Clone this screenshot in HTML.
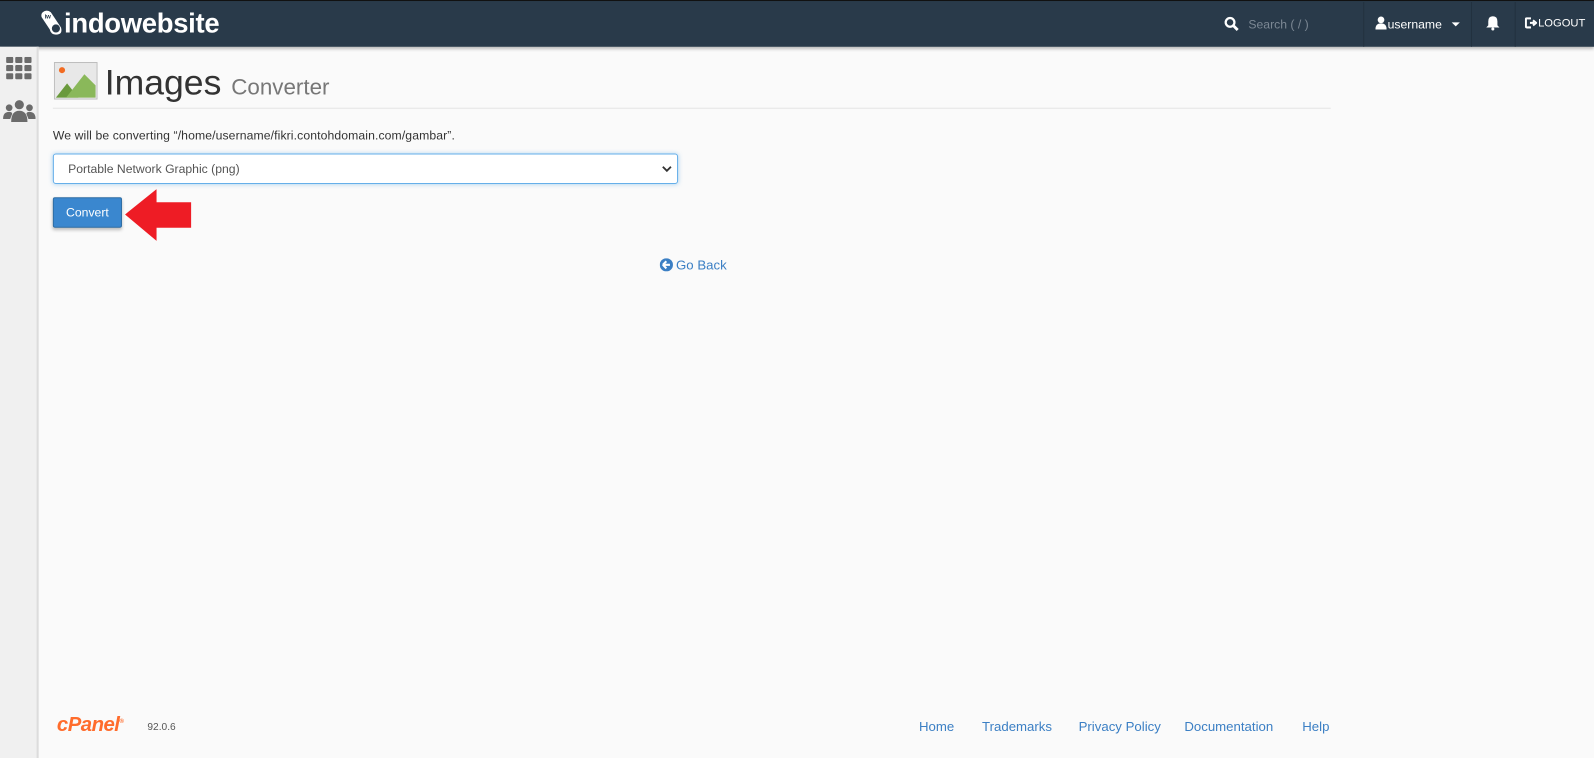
<!DOCTYPE html>
<html><head><meta charset="utf-8"><style>
*{box-sizing:border-box;margin:0;padding:0}
html,body{width:1594px;height:746px;overflow:hidden;background:#fafafa}
#w{position:absolute;left:0;top:0;width:1568px;height:734px;transform:scale(1.01658);transform-origin:0 0;font-family:"Liberation Sans",sans-serif}
.hdr{position:absolute;left:0;top:0;width:1568px;height:46px;background:#293a4a;border-top:1px solid #111;box-shadow:0 2px 3px rgba(0,0,0,.25)}
.logo{position:absolute;left:40px;top:7px;color:#fff;font-size:27px;font-weight:bold;letter-spacing:-.3px}
.side{position:absolute;left:0;top:46px;width:38px;height:700px;background:#f0f0f0;border-right:2px solid #dcdcdc}
.sep{position:absolute;top:1px;width:1px;height:44px;background:#22313f}
.hw{color:#fff;font-size:12px;position:absolute;top:16px}
a{color:#3b7fc4;text-decoration:none}
</style></head><body><div id="w">
<div class="hdr">
 <div class="logo"><svg width="22" height="26" viewBox="0 0 22 26" style="vertical-align:-3px;margin-right:1px"><path d="M2 3 Q6 0 10 3 L20 18 Q22 25 15 25 Q10 25 9 20 L1 8 Q0 5 2 3Z" fill="#fff"/><circle cx="15" cy="19" r="4" fill="#293a4a"/><text x="4" y="9" font-size="6" fill="#293a4a" font-family="Liberation Sans">iw</text></svg>indowebsite</div>
 <svg style="position:absolute;left:1204px;top:15px" width="15" height="15" viewBox="0 0 15 15"><circle cx="6" cy="6" r="4.3" fill="none" stroke="#fff" stroke-width="2.2"/><path d="M9 9l4.5 4.5" stroke="#fff" stroke-width="2.8"/></svg>
 <div class="hw" style="left:1228px;color:#7c8894;font-size:12px">Search ( / )</div>
 <div class="sep" style="left:1341px"></div>
 <svg style="position:absolute;left:1353px;top:15px" width="11" height="13" viewBox="0 0 11 13"><circle cx="5.5" cy="3.5" r="3.3" fill="#fff"/><path d="M0 13 Q0 7 5.5 7 Q11 7 11 13Z" fill="#fff"/></svg>
 <div class="hw" style="left:1365px">username</div>
 <div style="position:absolute;left:1428px;top:21px;border:4px solid transparent;border-top-color:#fff"></div>
 <div class="sep" style="left:1447px"></div>
 <svg style="position:absolute;left:1462px;top:14px" width="13" height="15" viewBox="0 0 13 15"><path d="M6.5 1 Q11 1 11 6 L11 10 L13 12 L0 12 L2 10 L2 6 Q2 1 6.5 1Z" fill="#fff"/><circle cx="6.5" cy="13.5" r="1.5" fill="#fff"/></svg>
 <div class="sep" style="left:1490px"></div>
 <svg style="position:absolute;left:1500px;top:16px" width="12" height="11" viewBox="0 0 12 11"><path d="M6 1 H2 Q1 1 1 2 V9 Q1 10 2 10 H6" fill="none" stroke="#fff" stroke-width="2"/><path d="M5 5.5 H9 M8 3 L11 5.5 L8 8" stroke="#fff" stroke-width="2" fill="none"/></svg>
 <div class="hw" style="left:1513px;font-size:11px">LOGOUT</div>
</div>
<div class="side">
 <svg style="position:absolute;left:6px;top:10px" width="26" height="23" viewBox="0 0 26 23"><g fill="#6b6b6b"><rect x="0" y="0" width="7" height="6" rx="1"/><rect x="9" y="0" width="7" height="6" rx="1"/><rect x="18" y="0" width="7" height="6" rx="1"/><rect x="0" y="8" width="7" height="6" rx="1"/><rect x="9" y="8" width="7" height="6" rx="1"/><rect x="18" y="8" width="7" height="6" rx="1"/><rect x="0" y="16" width="7" height="6" rx="1"/><rect x="9" y="16" width="7" height="6" rx="1"/><rect x="18" y="16" width="7" height="6" rx="1"/></g></svg>
 <svg style="position:absolute;left:3px;top:52px" width="32" height="22" viewBox="0 0 32 22"><g fill="#6b6b6b"><circle cx="16" cy="5" r="4.5"/><path d="M8 22 Q8 11 16 11 Q24 11 24 22Z"/><circle cx="6" cy="8" r="3.3"/><path d="M0 19 Q0 12 6 12 Q9 12 9 14 L7 19Z"/><circle cx="26" cy="8" r="3.3"/><path d="M32 19 Q32 12 26 12 Q23 12 23 14 L25 19Z"/></g></svg>
</div>
<svg style="position:absolute;left:53px;top:61px" width="43" height="37" viewBox="0 0 43 37"><rect x=".5" y=".5" width="42" height="36" fill="#e8e8e8" stroke="#bdbdbd"/><circle cx="8" cy="8" r="3" fill="#f26b21"/><path d="M2 35 L13 21 L24 35Z" fill="#6a9a3c"/><path d="M12 35 L30 12 L41 23 V35Z" fill="#8ab85a"/></svg>
<div style="position:absolute;left:103px;top:62px;font-size:35px;color:#333">Images <span style="font-size:22px;color:#777">Converter</span></div>
<div style="position:absolute;left:52px;top:106px;width:1257px;height:1px;background:#e5e5e5"></div>
<div style="position:absolute;left:52px;top:126px;font-size:12px;color:#333;letter-spacing:.1px">We will be converting “/home/username/fikri.contohdomain.com/gambar”.</div>
<div style="position:absolute;left:52px;top:151px;width:615px;height:30px;background:#fff;border:1px solid #66afe9;border-radius:3px;box-shadow:0 0 4px rgba(102,175,233,.5);font-size:12px;color:#555;padding:7px 14px">Portable Network Graphic (png)<svg style="position:absolute;right:5px;top:10px" width="10" height="8" viewBox="0 0 10 8"><path d="M1 2 L5 6 L9 2" stroke="#333" stroke-width="1.8" fill="none"/></svg></div>
<div style="position:absolute;left:52px;top:194px;width:68px;height:30px;background:#3a87cf;border:1px solid #2e6da4;border-radius:2px;color:#fff;font-size:12px;text-align:center;line-height:28px;box-shadow:0 2px 3px rgba(0,0,0,.25)">Convert</div>
<svg style="position:absolute;left:122px;top:186px" width="68" height="52" viewBox="0 0 68 52"><path d="M1 25 L32 0 V13 H66 V38 H32 V51Z" fill="#ee1c25"/></svg>
<svg style="position:absolute;left:649px;top:254px" width="13" height="13" viewBox="0 0 13 13"><circle cx="6.5" cy="6.5" r="6.5" fill="#3b7fc4"/><path d="M3 6.5 L6.5 3 M3 6.5 L6.5 10 M3 6.5 H10" stroke="#fff" stroke-width="2" fill="none"/></svg>
<a style="position:absolute;left:665px;top:253px;font-size:13px">Go Back</a>
<div style="position:absolute;left:56px;top:702px;font-size:20px;font-weight:bold;font-style:italic;color:#ff6c2c;letter-spacing:-.5px">cPanel<sup style="font-size:6px">®</sup></div>
<div style="position:absolute;left:145px;top:710px;font-size:10px;color:#555">92.0.6</div>
<div style="position:absolute;top:707px;font-size:13px;left:904px"><a>Home</a></div>
<div style="position:absolute;top:707px;font-size:13px;left:966px"><a>Trademarks</a></div>
<div style="position:absolute;top:707px;font-size:13px;left:1061px"><a>Privacy Policy</a></div>
<div style="position:absolute;top:707px;font-size:13px;left:1165px"><a>Documentation</a></div>
<div style="position:absolute;top:707px;font-size:13px;left:1281px"><a>Help</a></div>
</div></body></html>
